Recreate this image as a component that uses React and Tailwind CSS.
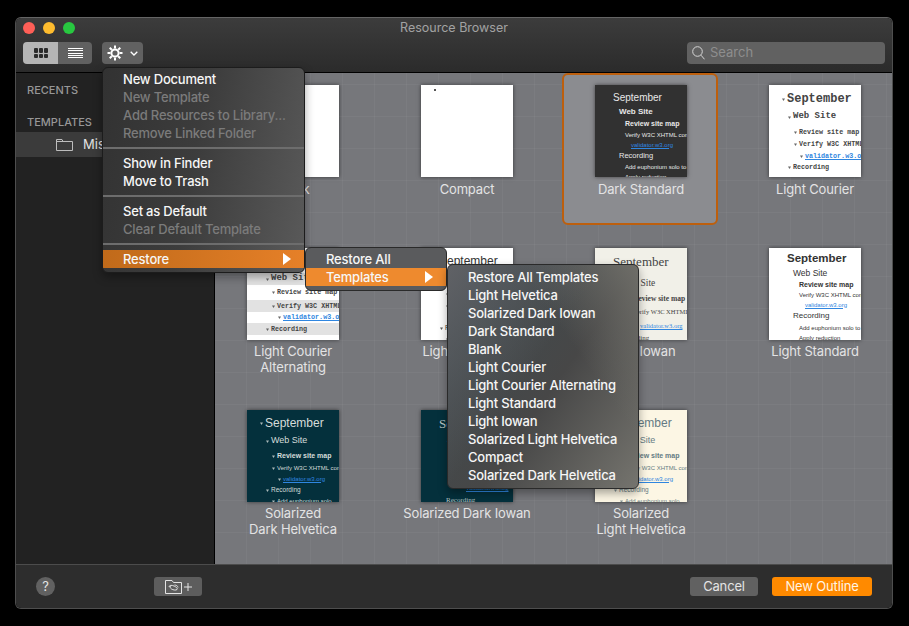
import React from 'react';

const rowBase = 'flex shrink-0 items-center whitespace-nowrap';
const linkClass = 'text-[#2f86e0] underline';

// Outline previews shown inside the template thumbnails
const darkStandardRows = [
  { text: 'September', className: 'h-[10px] mt-[7px] pl-[18px] text-[10px]' },
  { text: 'Web Site', className: 'h-[10px] mt-[5px] pl-[24px] text-[8px] font-bold' },
  { text: 'Review site map', className: 'h-[10px] mt-[2px] pl-[30px] text-[7px] font-bold' },
  { text: 'Verify W3C XHTML compliance', className: 'h-[10px] mt-[1px] pl-[30px] text-[6px]' },
  { text: 'validator.w3.org', className: 'h-[10px] pl-[36px] text-[6px]', link: true },
  { text: 'Recording', className: 'h-[10px] mt-[1px] pl-[24px] text-[7.5px]' },
  { text: 'Add euphonium solo to track', className: 'h-[10px] mt-[1px] pl-[30px] text-[6px]' },
  { text: 'Apply reduction', className: 'h-[10px] pl-[30px] text-[6px]' },
];

const lightStandardRows = [
  { text: 'September', className: 'h-[10px] mt-[6px] pl-[18px] text-[11.5px] font-bold' },
  { text: 'Web Site', className: 'h-[10px] mt-[4px] pl-[24px] text-[8.5px]' },
  { text: 'Review site map', className: 'h-[10px] mt-[2px] pl-[30px] text-[7px] font-bold' },
  { text: 'Verify W3C XHTML compliance', className: 'h-[10px] pl-[30px] text-[6px]' },
  { text: 'validator.w3.org', className: 'h-[10px] pl-[36px] text-[6px]', link: true },
  { text: 'Recording', className: 'h-[10px] mt-[1px] pl-[24px] text-[8px]' },
  { text: 'Add euphonium solo to track', className: 'h-[10px] mt-[2px] pl-[30px] text-[6px]' },
  { text: 'Apply reduction', className: 'h-[10px] pl-[30px] text-[6px]' },
];

const courierRows = [
  { text: 'September', bullet: true, className: 'h-[10px] mt-[9px] pl-[13px] text-[12px] font-bold' },
  { text: 'Web Site', bullet: true, className: 'h-[10px] mt-[8px] pl-[19px] text-[9px] font-bold' },
  { text: 'Review site map', bullet: true, className: 'h-[10px] mt-[5px] pl-[25px] text-[6.7px] font-bold' },
  { text: 'Verify W3C XHTML compliance', bullet: true, className: 'h-[10px] mt-[2px] pl-[25px] text-[6.7px] font-bold' },
  { text: 'validator.w3.org', bullet: true, className: 'h-[10px] mt-[2px] pl-[31px] text-[6.7px] font-bold', link: true },
  { text: 'Recording', bullet: true, className: 'h-[10px] mt-[1px] pl-[19px] text-[6.7px] font-bold' },
];

const courierAlternatingRows = [
  { text: 'September', bullet: true, className: 'h-[25px] pl-[13px] text-[12px] font-bold' },
  { text: 'Web Site', bullet: true, className: 'h-[12px] pl-[19px] text-[9px] font-bold bg-[#e2e2e2]' },
  { text: 'Review site map', bullet: true, className: 'h-[15px] pl-[25px] text-[6.7px] font-bold' },
  { text: 'Verify W3C XHTML compliance', bullet: true, className: 'h-[12px] pl-[25px] text-[6.7px] font-bold bg-[#e2e2e2]' },
  { text: 'validator.w3.org', bullet: true, className: 'h-[11px] pl-[31px] text-[6.7px] font-bold', link: true },
  { text: 'Recording', bullet: true, className: 'h-[12px] pl-[19px] text-[6.7px] font-bold bg-[#e2e2e2]' },
];

const helveticaRows = [
  { text: 'September', bullet: true, className: 'h-[10px] mt-[8px] pl-[13px] text-[12px]' },
  { text: 'Web Site', bullet: true, className: 'h-[10px] mt-[8px] pl-[19px] text-[9px]' },
  { text: 'Review site map', bullet: true, className: 'h-[10px] mt-[5px] pl-[25px] text-[7px] font-bold' },
  { text: 'Verify W3C XHTML compliance', bullet: true, className: 'h-[10px] mt-[2px] pl-[25px] text-[6px]' },
  { text: 'validator.w3.org', bullet: true, className: 'h-[10px] mt-[1px] pl-[31px] text-[6px]', link: true },
  { text: 'Recording', bullet: true, className: 'h-[10px] mt-[1px] pl-[19px] text-[6.5px]' },
  { text: 'Add euphonium solo', bullet: true, className: 'h-[10px] mt-[1px] pl-[25px] text-[6px]' },
];

const iowanRows = [
  { text: 'September', className: 'h-[10px] mt-[9px] pl-[18px] text-[13px]' },
  { text: 'Web Site', className: 'h-[10px] mt-[11px] pl-[26px] text-[9.5px]' },
  { text: 'Review site map', className: 'h-[10px] mt-[6px] pl-[38px] text-[7.5px] font-bold' },
  { text: 'Verify W3C XHTML compliance', className: 'h-[10px] mt-[3px] pl-[38px] text-[6.5px]' },
  { text: 'validator.w3.org', className: 'h-[10px] mt-[4px] pl-[45px] text-[6.5px]', link: true },
  { text: 'Recording', className: 'h-[10px] mt-[2px] pl-[25px] text-[7px]' },
];

const sans = "font-['Liberation_Sans',sans-serif]";
const serif = "font-['Liberation_Serif',serif]";
const mono = "font-['Liberation_Mono',monospace]";

const templates = [
  { label: ['Blank'], theme: 'bg-white' },
  { label: ['Compact'], theme: 'bg-white', dot: true },
  { label: ['Dark Standard'], theme: `bg-[#313131] text-[#e8e8e8] ${sans}`, rows: darkStandardRows, selected: true },
  { label: ['Light Courier'], theme: `bg-white text-[#444444] ${mono}`, rows: courierRows },
  { label: ['Light Courier', 'Alternating'], theme: `bg-white text-[#444444] ${mono}`, rows: courierAlternatingRows, tight: true },
  { label: ['Light Helvetica'], theme: `bg-white text-[#333333] ${sans}`, rows: helveticaRows, tight: true },
  { label: ['Light Iowan'], theme: `bg-[#f1f0e8] text-[#444444] ${serif}`, rows: iowanRows, tight: true },
  { label: ['Light Standard'], theme: `bg-white text-[#333333] ${sans}`, rows: lightStandardRows, tight: true },
  { label: ['Solarized', 'Dark Helvetica'], theme: `bg-[#04303c] text-[#d5dcda] ${sans}`, rows: helveticaRows, tight: true },
  { label: ['Solarized Dark Iowan'], theme: `bg-[#04303c] text-[#b9c5c5] ${serif}`, rows: iowanRows, tight: true },
  { label: ['Solarized', 'Light Helvetica'], theme: `bg-[#fcf6e4] text-[#657b83] ${sans}`, rows: helveticaRows, tight: true },
];

const templateMenuItems = [
  'Restore All Templates',
  'Light Helvetica',
  'Solarized Dark Iowan',
  'Dark Standard',
  'Blank',
  'Light Courier',
  'Light Courier Alternating',
  'Light Standard',
  'Light Iowan',
  'Solarized Light Helvetica',
  'Compact',
  'Solarized Dark Helvetica',
];

function Thumbnail({ theme, rows, dot }) {
  return (
    <div className={`flex h-[92px] w-[92px] shrink-0 flex-col overflow-hidden shadow-[0_0_4px_rgba(0,0,0,0.55)] ${theme}`}>
      {dot && <div className="ml-[13px] mt-[4px] h-[2px] w-[2px] bg-[#555555]" />}
      {rows && rows.map((row) => (
        <div key={row.text} className={`${rowBase} ${row.className}`}>
          {row.bullet && (
            <svg className="mr-[2px] shrink-0 opacity-80" width="3" height="3" viewBox="0 0 3 3">
              <path d="M0 0.5H3L1.5 3Z" fill="currentColor" />
            </svg>
          )}
          <span className={row.link ? linkClass : ''}>{row.text}</span>
        </div>
      ))}
    </div>
  );
}

function TemplateCell({ template }) {
  const frame = template.selected
    ? '-ml-[2px] -mt-[1px] border-2 border-[#bd5f0d] bg-[#8b8c90] pl-[2px] pt-[10px]'
    : 'pt-[11px]';
  return (
    <div className={`flex flex-col items-center rounded-[6px] ${frame}`}>
      <Thumbnail theme={template.theme} rows={template.rows} dot={template.dot} />
      <div className={`${template.tight ? 'mt-[3px]' : 'mt-[4px]'} text-center text-[13px] leading-[16px] tracking-[-0.15px] text-[#e3e3e4]`}>
        {template.label.map((line) => (
          <div key={line}>{line}</div>
        ))}
      </div>
    </div>
  );
}

function MenuItem({ children, disabled, arrow, className = '' }) {
  return (
    <div className={`flex h-[18px] items-center justify-between whitespace-nowrap pl-[20px] pr-[13px] text-[13px] font-medium leading-[18px] tracking-[-0.2px] ${disabled ? 'text-[#7b7b7b]' : 'text-[#f6f6f6]'} ${className}`}>
      <span>{children}</span>
      {arrow && (
        <svg width="8" height="12" viewBox="0 0 8 12">
          <path d="M0 0L8 6L0 12Z" fill="#ffffff" />
        </svg>
      )}
    </div>
  );
}

function MenuSeparator({ className = 'my-[5px]' }) {
  return <div className={`h-[2px] bg-[#6d6d6d] ${className}`} />;
}

function GearIcon() {
  return (
    <svg width="16" height="16" viewBox="0 0 16 16" fill="none" stroke="#ffffff">
      <circle cx="8" cy="8" r="3.6" strokeWidth="2" />
      <path d="M8 0.5V3.5M8 12.5V15.5M0.5 8H3.5M12.5 8H15.5M2.7 2.7L4.8 4.8M11.2 11.2L13.3 13.3M13.3 2.7L11.2 4.8M4.8 11.2L2.7 13.3" strokeWidth="2" />
    </svg>
  );
}

function LinkedFolderIcon() {
  return (
    <svg width="17" height="14" viewBox="0 0 17 14" fill="none" stroke="#e4e4e4" strokeWidth="1">
      <path d="M0.5 13.5V0.5H7L8.5 2.5H16.5V13.5Z" />
      <path d="M4 7C4 5 7 5 9 6S13 8 12 9.5C11 10.5 8 10 6.5 9S4.5 6.5 6 6" />
      <path d="M13 7.5C13 6 11 5 9.5 5" />
    </svg>
  );
}

function App() {
  return (
    <div className="h-[626px] w-[909px] overflow-hidden bg-black pl-[15px] pt-[17px] font-['Inter',sans-serif]">
      {/* Window */}
      <div className="relative flex h-[592px] w-[878px] flex-col overflow-hidden rounded-[6px] border border-[#4e4e4e] border-t-[#646464]">
        {/* Title bar and toolbar */}
        <div className="h-[55px] shrink-0 border-b border-black bg-[linear-gradient(#3c3c3c,#2b2b2b)] px-[7px]">
          <div className="grid h-[20px] grid-cols-[1fr_auto_1fr] items-center">
            <div className="flex gap-2">
              <span className="h-3 w-3 rounded-full bg-[#ff5f57]" />
              <span className="h-3 w-3 rounded-full bg-[#febc2e]" />
              <span className="h-3 w-3 rounded-full bg-[#28c840]" />
            </div>
            <div className="text-[12.5px] text-[#a2a2a2]">Resource Browser</div>
            <div />
          </div>
          <div className="mt-[4px] flex h-[22px] items-center">
            <div className="flex h-[22px] w-[69px] overflow-hidden rounded-[4px]">
              <div className="flex w-[35px] items-center justify-center bg-[#b5b5b5]">
                <div className="grid grid-cols-3 gap-[1px]">
                  {[0, 1, 2, 3, 4, 5].map((i) => (
                    <span key={i} className="h-[4.5px] w-[4px] rounded-[1px] bg-[#2b2b2b]" />
                  ))}
                </div>
              </div>
              <div className="flex flex-1 flex-col items-center justify-center gap-[1.4px] bg-[#616161]">
                {[0, 1, 2, 3, 4].map((i) => (
                  <span key={i} className="h-px w-[15px] bg-white" />
                ))}
              </div>
            </div>
            <div className="ml-[10px] flex h-[22px] w-[41px] items-center gap-[7px] rounded-[4px] bg-[#616161] pl-[5px]">
              <GearIcon />
              <svg width="8" height="5" viewBox="0 0 8 5" fill="none" stroke="#ffffff" strokeWidth="1.3">
                <path d="M0.7 0.7L4 4L7.3 0.7" />
              </svg>
            </div>
            <div className="ml-auto flex h-[22px] w-[198px] items-center gap-[5px] rounded-[4px] bg-[#616161] pl-[5px]">
              <svg width="13" height="14" viewBox="0 0 13 14" fill="none" stroke="#d6d6d6" strokeWidth="1">
                <circle cx="5.5" cy="5.5" r="4.8" />
                <path d="M9 9.2L12.5 13.3" />
              </svg>
              <span className="text-[13px] text-[#8e8e8e]">Search</span>
            </div>
          </div>
        </div>

        {/* Body */}
        <div className="flex min-h-0 flex-1">
          <div className="w-[199px] shrink-0 border-r border-black bg-[#222222] pt-[10px]">
            <div className="pl-[11px] text-[11px] font-medium leading-[14px] text-[#979797]">RECENTS</div>
            <div className="mt-[18px] pl-[11px] text-[11px] font-medium leading-[14px] text-[#979797]">TEMPLATES</div>
            <div className="mt-[3px] flex h-[25px] items-center bg-[#3b3b3b] pl-[40px]">
              <svg width="17" height="12" viewBox="0 0 17 12" fill="none" stroke="#bdbdbd" strokeWidth="1">
                <path d="M0.5 11.5V0.5H6L7 2.5H16.5V11.5ZM0.5 2.5H7" />
              </svg>
              <span className="ml-[10px] text-[13px] text-[#e2e2e2]">Misc</span>
            </div>
          </div>
          <div className="flex-1 bg-[#76777b] bg-[linear-gradient(rgba(255,255,255,0.035)_1px,transparent_1px),linear-gradient(90deg,rgba(255,255,255,0.035)_1px,transparent_1px)] bg-[size:32px_32px] bg-[position:31px_11px] pl-px pt-px">
            <div className="grid grid-cols-[repeat(4,154px)] grid-rows-[151px_150px_150px] gap-x-5 gap-y-3">
              {templates.map((template) => (
                <TemplateCell key={template.label.join(' ')} template={template} />
              ))}
            </div>
          </div>
        </div>

        {/* Footer */}
        <div className="flex h-[44px] shrink-0 items-center border-t border-[#4c4c4c] bg-[#2d2d2d] pl-[20px] pr-[20px]">
          <div className="flex h-[19px] w-[19px] items-center justify-center rounded-full bg-[#616161] text-[13px] text-[#e4e4e4]">?</div>
          <div className="ml-[99px] flex h-[19px] w-[48px] items-center justify-center gap-[2px] rounded-[3px] bg-[#5d5d5d]">
            <LinkedFolderIcon />
            <svg width="8" height="8" viewBox="0 0 8 8" stroke="#e4e4e4" strokeWidth="1">
              <path d="M4 0V8M0 4H8" />
            </svg>
          </div>
          <div className="ml-auto flex h-[19px] w-[68px] items-center justify-center rounded-[3px] bg-[#616161] text-[13px] tracking-[-0.15px] text-[#e4e4e4]">Cancel</div>
          <div className="ml-[14px] flex h-[19px] w-[100px] items-center justify-center rounded-[3px] bg-[#ff8a00] text-[13px] tracking-[-0.15px] text-[#fff4e4]">New Outline</div>
        </div>

        {/* Action menu */}
        <div className="absolute left-[86px] top-[49px] z-10 h-[206px] w-[203px] overflow-hidden rounded-[6px] border border-[#1c1c1c] bg-[linear-gradient(100deg,#323232,#3c3c3c_45%,#5a5a5a)] pt-[2px] shadow-[0_4px_10px_rgba(0,0,0,0.35)]">
          <MenuItem>New Document</MenuItem>
          <MenuItem disabled>New Template</MenuItem>
          <MenuItem disabled>Add Resources to Library...</MenuItem>
          <MenuItem disabled>Remove Linked Folder</MenuItem>
          <MenuSeparator />
          <MenuItem>Show in Finder</MenuItem>
          <MenuItem>Move to Trash</MenuItem>
          <MenuSeparator />
          <MenuItem>Set as Default</MenuItem>
          <MenuItem disabled>Clear Default Template</MenuItem>
          <MenuSeparator />
          <MenuItem arrow className="bg-[linear-gradient(90deg,#c06a1a,#e68028)]">Restore</MenuItem>
        </div>

        {/* Restore submenu */}
        <div className="absolute left-[289px] top-[229px] z-20 h-[44px] w-[142px] overflow-hidden rounded-[6px] border border-[#2a2a2a] bg-[#5a5b5d] pt-[2px]">
          <MenuItem>Restore All</MenuItem>
          <MenuItem arrow className="bg-[#ee8a2e]">Templates</MenuItem>
        </div>

        {/* Templates submenu */}
        <div className="absolute left-[431px] top-[246px] z-30 h-[225px] w-[192px] overflow-hidden rounded-[6px] border border-[#2a2a2a] bg-[linear-gradient(125deg,rgba(100,100,104,0.9),rgba(72,72,72,0)_45%),linear-gradient(235deg,rgba(115,114,108,0.9),rgba(72,72,72,0)_35%),linear-gradient(305deg,#75746e,#474747_45%,#3d4b51)] pt-[3px] shadow-[0_4px_10px_rgba(0,0,0,0.35)]">
          {templateMenuItems.map((item) => (
            <MenuItem key={item}>{item}</MenuItem>
          ))}
        </div>
      </div>
    </div>
  );
}

export default App;
